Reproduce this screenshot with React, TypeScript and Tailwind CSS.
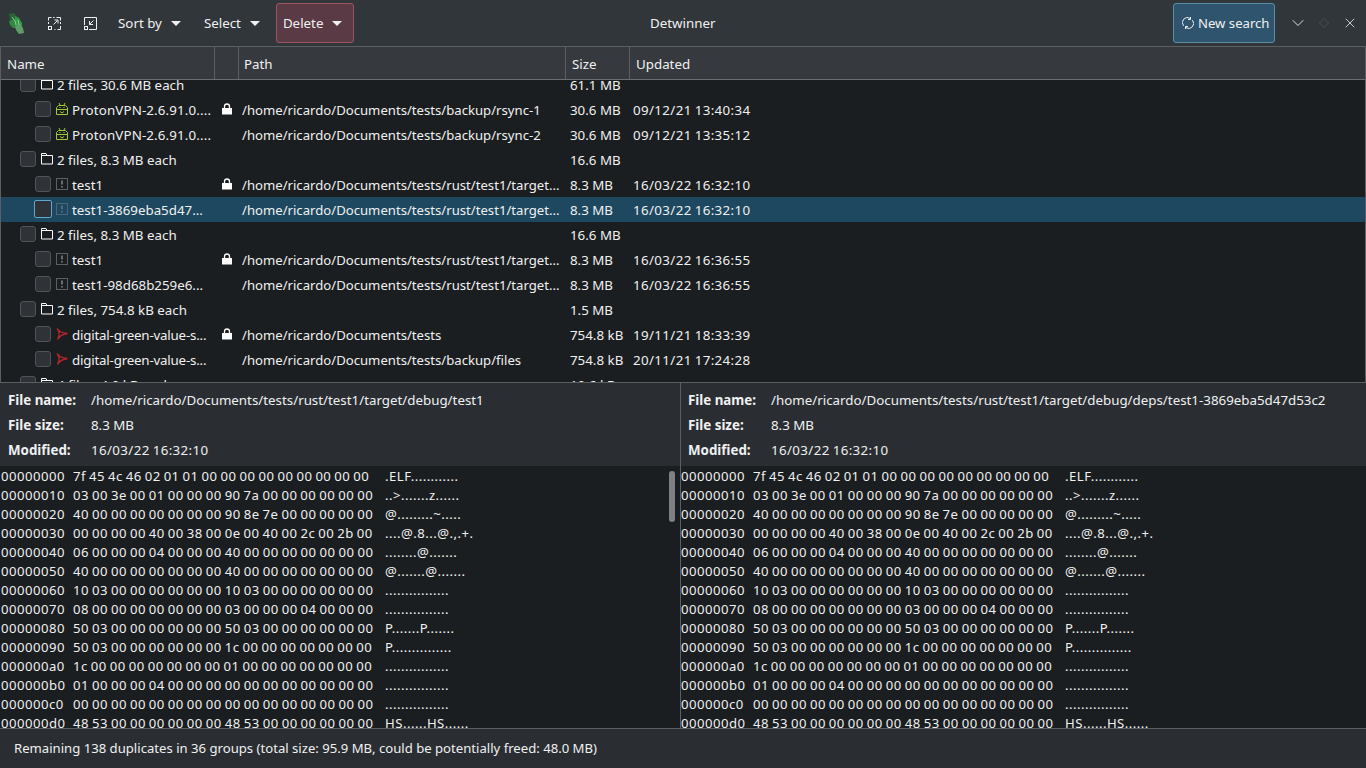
import { ChevronDown, X } from "lucide-react";

type Kind = "folder" | "android" | "exec" | "pdf";

interface Row {
  group?: boolean;
  kind: Kind;
  name: string;
  lock?: boolean;
  path?: string;
  size: string;
  updated?: string;
  selected?: boolean;
}

const rows: Row[] = [
  { group: true, kind: "folder", name: "2 files, 30.6 MB each", size: "61.1 MB" },
  { kind: "android", name: "ProtonVPN-2.6.91.0....", lock: true, path: "/home/ricardo/Documents/tests/backup/rsync-1", size: "30.6 MB", updated: "09/12/21 13:40:34" },
  { kind: "android", name: "ProtonVPN-2.6.91.0....", path: "/home/ricardo/Documents/tests/backup/rsync-2", size: "30.6 MB", updated: "09/12/21 13:35:12" },
  { group: true, kind: "folder", name: "2 files, 8.3 MB each", size: "16.6 MB" },
  { kind: "exec", name: "test1", lock: true, path: "/home/ricardo/Documents/tests/rust/test1/target...", size: "8.3 MB", updated: "16/03/22 16:32:10" },
  { kind: "exec", name: "test1-3869eba5d47...", path: "/home/ricardo/Documents/tests/rust/test1/target...", size: "8.3 MB", updated: "16/03/22 16:32:10", selected: true },
  { group: true, kind: "folder", name: "2 files, 8.3 MB each", size: "16.6 MB" },
  { kind: "exec", name: "test1", lock: true, path: "/home/ricardo/Documents/tests/rust/test1/target...", size: "8.3 MB", updated: "16/03/22 16:36:55" },
  { kind: "exec", name: "test1-98d68b259e6...", path: "/home/ricardo/Documents/tests/rust/test1/target...", size: "8.3 MB", updated: "16/03/22 16:36:55" },
  { group: true, kind: "folder", name: "2 files, 754.8 kB each", size: "1.5 MB" },
  { kind: "pdf", name: "digital-green-value-s...", lock: true, path: "/home/ricardo/Documents/tests", size: "754.8 kB", updated: "19/11/21 18:33:39" },
  { kind: "pdf", name: "digital-green-value-s...", path: "/home/ricardo/Documents/tests/backup/files", size: "754.8 kB", updated: "20/11/21 17:24:28" },
  { group: true, kind: "folder", name: "4 files, 4.9 kB each", size: "19.6 kB" },
];

const hexRows: [string, string, string][] = [
  ["00000000", "7f 45 4c 46 02 01 01 00 00 00 00 00 00 00 00 00", ".ELF............"],
  ["00000010", "03 00 3e 00 01 00 00 00 90 7a 00 00 00 00 00 00", "..>.......z......"],
  ["00000020", "40 00 00 00 00 00 00 00 90 8e 7e 00 00 00 00 00", "@.........~....."],
  ["00000030", "00 00 00 00 40 00 38 00 0e 00 40 00 2c 00 2b 00", "....@.8...@.,.+."],
  ["00000040", "06 00 00 00 04 00 00 00 40 00 00 00 00 00 00 00", "........@......."],
  ["00000050", "40 00 00 00 00 00 00 00 40 00 00 00 00 00 00 00", "@.......@......."],
  ["00000060", "10 03 00 00 00 00 00 00 10 03 00 00 00 00 00 00", "................"],
  ["00000070", "08 00 00 00 00 00 00 00 03 00 00 00 04 00 00 00", "................"],
  ["00000080", "50 03 00 00 00 00 00 00 50 03 00 00 00 00 00 00", "P.......P......."],
  ["00000090", "50 03 00 00 00 00 00 00 1c 00 00 00 00 00 00 00", "P..............."],
  ["000000a0", "1c 00 00 00 00 00 00 00 01 00 00 00 00 00 00 00", "................"],
  ["000000b0", "01 00 00 00 04 00 00 00 00 00 00 00 00 00 00 00", "................"],
  ["000000c0", "00 00 00 00 00 00 00 00 00 00 00 00 00 00 00 00", "................"],
  ["000000d0", "48 53 00 00 00 00 00 00 48 53 00 00 00 00 00 00", "HS......HS......"],
];

const Caret = () => (
  <svg width="10" height="5" viewBox="0 0 10 5" className="ml-[9px] shrink-0">
    <path d="M0 0h10L5 5z" fill="#eff0f1" />
  </svg>
);

const Logo = () => (
  <svg width="15" height="21" viewBox="0 0 15 21">
    <defs>
      <filter id="soft">
        <feGaussianBlur stdDeviation="0.6" />
      </filter>
    </defs>
    <g filter="url(#soft)">
      <path d="M0 1l5-1 3 4-1 5-4 1-2-4z" fill="#2a6236" />
      <path d="M0 8l5-2 4 4 0 5-5 0-3-3z" fill="#2f8a40" />
      <path d="M6 3l4 2 3 5 0 4-4 1-3-5z" fill="#2f9a44" />
      <path d="M6 13l5-2 3 4 1 5-5 1-3-4z" fill="#5d9e68" />
      <path d="M3 4l3 4 1 4M9 7l1 5" stroke="#9ccfa6" strokeWidth="0.9" fill="none" />
    </g>
  </svg>
);

const ExpandIcon = () => (
  <svg width="13" height="13" viewBox="0 0 13 13" fill="none" stroke="#eff0f1" strokeWidth="1">
    <path d="M.5 3.500v-3h3M5 .5h1.500M8.500 .5h4v3M12.500 5v2M12.500 9v3.500h-3M7.500 12.500h-1M.5 5v2" />
    <rect x=".5" y="9.500" width="3" height="3" />
    <path d="M5.500 7.500L9.500 3.500M6.500 3h3.500v3.500" />
  </svg>
);

const ShrinkIcon = () => (
  <svg width="13" height="13" viewBox="0 0 13 13" fill="none" stroke="#eff0f1" strokeWidth="1">
    <path d="M.5 8V.5h12v12H5" />
    <rect x=".5" y="9.500" width="3" height="3" />
    <path d="M9.500 3.500l-4 4M5.500 4v3.500H9" />
  </svg>
);

const RefreshIcon = () => (
  <svg width="12" height="12" viewBox="0 0 12 12" fill="none" stroke="#eff0f1" strokeWidth="1" className="mr-[4px] shrink-0">
    <path d="M1.600 8.800A5 5 0 0 1 8.200 1.400" />
    <path d="M10.400 3.200A5 5 0 0 1 3.800 10.600" />
    <path d="M8.500 0v2.500H6M3.500 12V9.500H6" />
  </svg>
);

const FileIcon = ({ kind, dim }: { kind: Kind; dim?: boolean }) => {
  if (kind === "folder") {
    return (
      <svg width="12" height="12" viewBox="0 0 12 12" fill="none" stroke="#fcfcfc" strokeWidth="1">
        <path d="M.5 .5h4.500l1 2h5.500v8.500H.5z" />
        <path d="M.5 2.500h5.500" />
      </svg>
    );
  }
  if (kind === "android") {
    return (
      <svg width="12" height="12" viewBox="0 0 12 12" fill="none" stroke="#a4c639" strokeWidth="1">
        <path d="M3 0l1 2M9 0L8 2M2.500 2.500h7l2 2v7H.5v-7zM.5 6.500h11" />
        <path d="M3.500 4.500h1M7.500 4.500h1" />
        <path d="M4 8.500l2 1.500 2-1.500" />
      </svg>
    );
  }
  if (kind === "exec") {
    return (
      <svg width="12" height="12" viewBox="0 0 12 12" fill="none" stroke={dim ? "#4d6676" : "#5d6063"} strokeWidth="1">
        <rect x=".5" y=".5" width="11" height="11" />
        <path d="M6 2.500v4M6 8v1.500" stroke={dim ? "#5f7686" : "#85888a"} strokeWidth="1.500" />
      </svg>
    );
  }
  return (
    <svg width="12" height="12" viewBox="0 0 12 12" fill="none" stroke="#b8262d" strokeWidth="1.300">
      <path d="M1 .5C3 3 4.500 5 11.500 5.500 7 6 3.500 8 1.500 11.500 3.500 8 4 4 1 .5z" />
    </svg>
  );
};

const Lock = () => (
  <svg width="10" height="12" viewBox="0 0 10 12">
    <path d="M2.500 5.500V3.500a2.500 2.500 0 0 1 5 0v2" fill="none" stroke="#fcfcfc" strokeWidth="1.300" />
    <rect x="0" y="5" width="10" height="6.500" fill="#fcfcfc" />
  </svg>
);

const Checkbox = ({ focused }: { focused?: boolean }) => (
  <span
    className={
      focused
        ? "w-[18px] h-[18px] -mx-px mb-px shrink-0 rounded-[2px] border border-[#5fa8cf] bg-[#2f3338]"
        : "w-[16px] h-[16px] mb-px shrink-0 rounded-[3px] border border-[#505357] bg-[#2f3338]"
    }
  />
);

const ToolButton = ({ label }: { label: string }) => (
  <div className="h-[40px] flex items-center px-[7px] mr-[9px] text-[#eff0f1]">
    <span className="pt-px">{label}</span>
    <Caret />
  </div>
);

const dateClass = "tracking-[.38px] [word-spacing:-.9px]";

const TreeRow = ({ row }: { row: Row }) => (
  <div className={`h-[25px] flex items-center text-[#eff0f1] ${row.selected ? "bg-[#1d4860]" : ""}`}>
    <div className={`w-[214px] shrink-0 flex items-center ${row.group ? "pl-[19px]" : "pl-[34px]"}`}>
      <Checkbox focused={row.selected} />
      <span className="w-[12px] ml-[5px] mb-px flex justify-center shrink-0">
        <FileIcon kind={row.kind} dim={row.selected} />
      </span>
      <span
        className={`ml-[4px] pt-[2px] whitespace-nowrap ${
          row.kind === "pdf" ? "tracking-[-.2px]" : row.kind === "android" ? "tracking-[.14px]" : ""
        }`}
      >
        {row.name}
      </span>
    </div>
    <div className="w-[24px] shrink-0 flex justify-center pr-[1px] mb-px">{row.lock && <Lock />}</div>
    <div className="w-[326px] shrink-0 pl-[3px] pt-[2px] text-[13.15px] whitespace-nowrap">{row.path}</div>
    <div className="w-[64px] shrink-0 pl-[5px] pt-[2px] whitespace-nowrap">{row.size}</div>
    <div className={`pl-[4px] pt-[2px] whitespace-nowrap ${dateClass}`}>{row.updated}</div>
  </div>
);

const HeaderCell = ({ label, className }: { label?: string; className: string }) => (
  <div className={`h-full flex items-center pt-[4px] border-r border-[#5b5e62] ${className}`}>{label}</div>
);

const FileDetails = ({ name, size, modified, right }: { name: string; size: string; modified: string; right?: boolean }) => (
  <div className={`h-[83px] bg-[#2a2e32] pt-[5px] text-[#eff0f1] leading-[25px] ${right ? "pl-[7px]" : "pl-[8px]"}`}>
    <div className="flex">
      <span className="w-[83px] font-bold">File name:</span>
      <span className="whitespace-nowrap">{name}</span>
    </div>
    <div className="flex">
      <span className="w-[83px] font-bold">File size:</span>
      <span>{size}</span>
    </div>
    <div className="flex">
      <span className="w-[83px] font-bold">Modified:</span>
      <span className={dateClass}>{modified}</span>
    </div>
  </div>
);

const HexView = ({ right }: { right?: boolean }) => (
  <div className="h-[262px] pt-px overflow-hidden bg-[#1b1e20] text-[13.13px] text-[#eff0f1] leading-[19px] tracking-[.48px] [word-spacing:-.9px]">
    {hexRows.map((r) => (
      <div key={r[0]} className="flex h-[19px] whitespace-nowrap">
        <span className={`shrink-0 ${right ? "w-[72px]" : "w-[73px] pl-[1px]"}`}>{r[0]}</span>
        <span className="w-[312px] shrink-0">{r[1]}</span>
        <span>{r[2]}</span>
      </div>
    ))}
  </div>
);

export default function App() {
  return (
    <div className="w-[1366px] h-[768px] flex flex-col overflow-hidden bg-[#31363b] text-[13.33px] text-[#eff0f1] font-['Noto_Sans',sans-serif]">
      {/* title bar */}
      <div className="h-[46px] shrink-0 flex items-center pl-[9px] pr-[8px] relative">
        <Logo />
        <div className="ml-[24px]"><ExpandIcon /></div>
        <div className="ml-[23px] mr-[14px]"><ShrinkIcon /></div>
        <ToolButton label="Sort by" />
        <ToolButton label="Select" />
        <div className="h-[40px] w-[78px] flex items-center pl-[6px] rounded-[3px] border border-[#9a5560] bg-[#5a3a44]">
          <span className="pt-px">Delete</span>
          <Caret />
        </div>
        <span className="absolute left-[650px] top-[13px] pt-px">Detwinner</span>
        <div className="ml-auto h-[40px] w-[102px] flex items-center pl-[8px] text-[13.13px] rounded-[3px] border border-[#5b8ba5] bg-[#2f556e]">
          <RefreshIcon />
          <span className="pt-px whitespace-nowrap">New search</span>
        </div>
        <ChevronDown size={20} strokeWidth={1.1} className="ml-[13px] text-[#eff0f1]" />
        <svg width="10" height="10" viewBox="0 0 10 10" className="ml-[11px]" fill="none" stroke="#4b4e52">
          <path d="M5 .5L9.500 5 5 9.500.5 5z" />
        </svg>
        <X size={16} strokeWidth={1.2} className="ml-[13px] text-[#eff0f1]" />
      </div>

      {/* duplicates tree */}
      <div className="h-[336px] shrink-0 flex flex-col border-x border-t border-[#5b5e62] bg-[#1b1e20]">
        <div className="h-[33px] shrink-0 flex items-center bg-[#363a3e] border-b border-[#6b6e72]">
          <HeaderCell label="Name" className="w-[214px] pl-[6px]" />
          <HeaderCell className="w-[24px]" />
          <HeaderCell label="Path" className="w-[327px] pl-[5px]" />
          <HeaderCell label="Size" className="w-[64px] pl-[6px]" />
          <div className="pl-[6px] pt-[4px]">Updated</div>
        </div>
        <div className="flex-1 overflow-hidden">
          <div className="-mt-[8px]">
            {rows.map((r, i) => (
              <TreeRow key={i} row={r} />
            ))}
          </div>
        </div>
      </div>

      {/* compared files */}
      <div className="h-[346px] shrink-0 flex border-t border-[#5b5e62]">
        <div className="w-[680px] shrink-0 relative">
          <FileDetails name="/home/ricardo/Documents/tests/rust/test1/target/debug/test1" size="8.3 MB" modified="16/03/22 16:32:10" />
          <HexView />
          <div className="absolute right-[5px] top-[88px] w-[6px] h-[51px] rounded-full bg-[#7e8083]" />
        </div>
        <div className="flex-1 min-w-0 border-l border-[#5b5e62]">
          <FileDetails right name="/home/ricardo/Documents/tests/rust/test1/target/debug/deps/test1-3869eba5d47d53c2" size="8.3 MB" modified="16/03/22 16:32:10" />
          <HexView right />
        </div>
      </div>

      {/* status bar */}
      <div className="flex-1 flex items-center pl-[14px] pt-px text-[13.13px] border-t border-[#5b5e62] bg-[#2a2e32]">
        Remaining 138 duplicates in 36 groups (total size: 95.9 MB, could be potentially freed: 48.0 MB)
      </div>
    </div>
  );
}
